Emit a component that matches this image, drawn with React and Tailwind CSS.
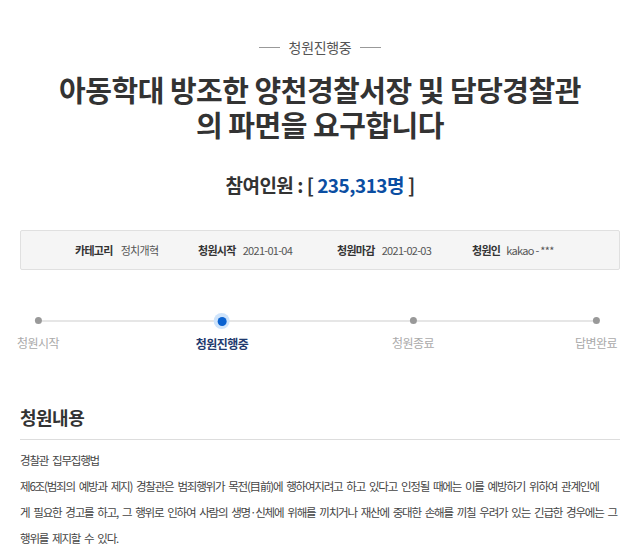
export default function App() {
  return (
    <div className="w-[640px] h-[549px] bg-white overflow-hidden font-['Noto_Sans_CJK_KR','Noto_Sans',sans-serif]">
      <div className="flex items-center justify-center gap-[9px] pt-[36px]">
        <span className="w-[21px] h-px bg-[#999]"></span>
        <span className="text-[14px] leading-[22px] text-[#555] tracking-[-0.3px]">청원진행중</span>
        <span className="w-[21px] h-px bg-[#999]"></span>
      </div>
      <h1 className="mt-[14px] text-center text-[29px] leading-[35px] font-bold text-[#333] tracking-[-0.5px]">
        아동학대 방조한 양천경찰서장 및 담당경찰관
        <br />
        의 파면을 요구합니다
      </h1>
      <div className="mt-[29px] text-center text-[19px] leading-[28px] font-bold text-[#333] tracking-[-0.5px]">
        참여인원 : [ <span className="text-[#0b4ea2]">235,313명</span> ]
      </div>
      <div className="mx-[20px] mt-[31px] h-[40px] bg-[#f5f5f5] border border-[#e0e0e0] rounded-[2px] flex items-center text-[11px] text-[#333] tracking-[-0.7px]">
        <div className="flex items-center gap-[8px] ml-[54px] w-[123px]">
          <span className="font-bold">카테고리</span>
          <span className="text-[#555]">정치개혁</span>
        </div>
        <div className="flex items-center gap-[7px] w-[139px]">
          <span className="font-bold">청원시작</span>
          <span className="text-[#555]">2021-01-04</span>
        </div>
        <div className="flex items-center gap-[7px] w-[135px]">
          <span className="font-bold">청원마감</span>
          <span className="text-[#555]">2021-02-03</span>
        </div>
        <div className="flex items-center gap-[6px]">
          <span className="font-bold">청원인</span>
          <span className="text-[#555]">kakao - ***</span>
        </div>
      </div>
      <div className="relative mt-[42px] h-[40px]">
        <div className="absolute left-[38px] right-[44px] top-[8px] h-[2px] bg-[#e6e6e6]"></div>
        <Step x={38} label="청원시작" />
        <Step x={222} label="청원진행중" active />
        <Step x={413} label="청원종료" />
        <Step x={596} label="답변완료" />
      </div>
      <div className="mx-[20px] mt-[52px]">
        <h2 className="text-[18px] leading-[26px] font-bold text-[#333] pb-[9px] border-b border-[#ddd] tracking-[-0.5px]">청원내용</h2>
        <div className="pt-[7px] text-[11.5px] leading-[26px] text-[#444] tracking-[-1.2px] [word-spacing:2.5px] whitespace-nowrap">
          <p>경찰관 집무집행법</p>
          <p>
            제6조(범죄의 예방과 제지) 경찰관은 범죄행위가 목전(目前)에 행하여지려고 하고 있다고 인정될 때에는 이를 예방하기 위하여 관계인에
            <br />
            게 필요한 경고를 하고, 그 행위로 인하여 사람의 생명·신체에 위해를 끼치거나 재산에 중대한 손해를 끼칠 우려가 있는 긴급한 경우에는 그
            <br />
            행위를 제지할 수 있다.
          </p>
        </div>
      </div>
    </div>
  );
}

function Step({ x, label, active }) {
  return (
    <div className="absolute top-0 flex flex-col items-center" style={{ left: x, transform: "translateX(-50%)" }}>
      {active ? (
        <span className="mt-[1px] w-[16px] h-[16px] rounded-full bg-[#cfe4fb] flex items-center justify-center">
          <span className="w-[9px] h-[9px] rounded-full bg-[#0a62d0]"></span>
        </span>
      ) : (
        <span className="mt-[5px] mb-[4px] w-[7px] h-[7px] rounded-full bg-[#999]"></span>
      )}
      <span className={"mt-[7px] text-[12px] leading-[16px] whitespace-nowrap tracking-[-0.5px] " + (active ? "font-bold text-[#1f3a6e]" : "text-[#aaa]")}>{label}</span>
    </div>
  );
}
